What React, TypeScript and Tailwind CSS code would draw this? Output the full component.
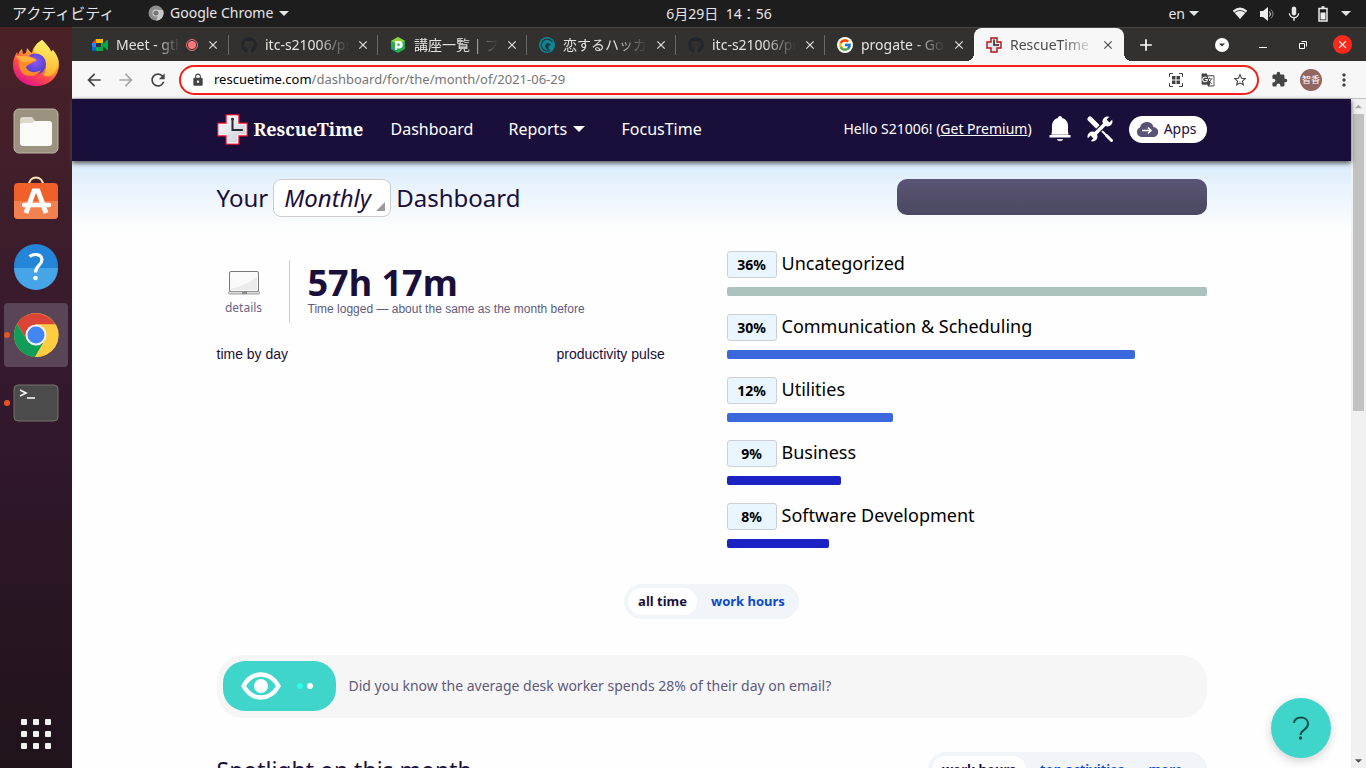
import type { ReactNode } from "react";
import { FaGithub } from "react-icons/fa";
import { FcGoogle } from "react-icons/fc";
import { MdArrowBack, MdArrowForward, MdRefresh, MdLock, MdStarBorder, MdExtension, MdMoreVert, MdGTranslate, MdMic, MdClose, MdAdd } from "react-icons/md";

const UI = "font-['Noto_Sans','Noto_Sans_CJK_JP',sans-serif]";

function CrossLogo({ className }: { className: string }) {
  return (
    <svg viewBox="0 0 30 30" className={className} aria-hidden="true">
      <defs>
        <linearGradient id="cross" x1="0" y1="0" x2="1" y2="1">
          <stop offset="0" stopColor="#ffffff" />
          <stop offset="1" stopColor="#c3ccd4" />
        </linearGradient>
      </defs>
      <path d="M9 1h12v8h8v12h-8v8H9v-8H1V9h8z" fill="url(#cross)" stroke="#f0102c" strokeWidth="1.6" />
      <path d="M9.9 1.9h10.2v8h8v10.2h-8v8H9.9v-8h-8V9.9h8z" fill="none" stroke="#fff" strokeWidth="1" />
      <path d="M15 4.5v11h10" fill="none" stroke="#2b2b33" strokeWidth="2" />
      <circle cx="15" cy="5" r="1.4" fill="#2b2b33" />
    </svg>
  );
}

function CrossFavicon() {
  return (
    <svg viewBox="0 0 16 16" className="size-4" aria-hidden="true">
      <path d="M5 1h6v4h4v6h-4v4H5v-4H1V5h4z" fill="#e4e6e8" stroke="#b3131b" strokeWidth="1.400" />
      <path d="M8 2.500V8h5" fill="none" stroke="#222" strokeWidth="1.500" />
    </svg>
  );
}

function FirefoxIcon() {
  return (
    <svg viewBox="0 0 48 48" className="size-12" aria-hidden="true">
      <defs>
        <linearGradient id="fox" x1="0.8" y1="0.05" x2="0.25" y2="0.95">
          <stop offset="0" stopColor="#fff44f" />
          <stop offset="0.35" stopColor="#ffa436" />
          <stop offset="0.68" stopColor="#ff4a4a" />
          <stop offset="1" stopColor="#e31587" />
        </linearGradient>
        <radialGradient id="globe" cx="0.5" cy="0.4" r="0.6">
          <stop offset="0" stopColor="#9059ff" />
          <stop offset="1" stopColor="#4a3fc4" />
        </radialGradient>
        <linearGradient id="tail" x1="0.5" y1="0" x2="0.4" y2="1">
          <stop offset="0" stopColor="#fff36b" />
          <stop offset="1" stopColor="#ffb22e" />
        </linearGradient>
      </defs>
      <path d="M30 1c5 5 8 8 9 12l2-2c4 5 6 9 6 14 0 13-10 22-23 22S1 38 1 26c0-6 2-10 4-13l1 3c1-3 2-5 4-6l1 5 3-1 1-5c2 2 3 4 5 5 1-6 5-10 10-13z" fill="url(#fox)" />
      <path d="M30 1c5 5 8 8 9 12l2-2c5 7 7 14 2 22-3 5-8 5-12 3 4-4 4-10 1-15-3-4-8-5-10-8 0-5 3-9 8-12z" fill="url(#tail)" />
      <circle cx="23.500" cy="25" r="10.500" fill="url(#globe)" />
      <path d="M7 20c5-5 12-3 17 0 2 2-3 3-6 5-3 1-5 3-3 5 3 4 9 4 14 1-3 6-13 8-19 3-3-4-4-9-3-14z" fill="#ff8a2a" />
      <path d="M4 17c8-1 13 0 18 3l3 2c-5-1-8 2-12 1-4 0-7-2-9-6z" fill="#ffb03a" />
    </svg>
  );
}

function FilesIcon() {
  return (
    <svg viewBox="0 0 46 46" className="size-[46px]" aria-hidden="true">
      <rect x="1" y="1" width="44" height="44" rx="5" fill="#9b9280" stroke="#bdb7aa" />
      <rect x="7" y="13" width="32" height="25" rx="3" fill="#fafaf8" />
      <path d="M7 16v-4c0-2 1-3 3-3h9l3 4-3 2h-9z" fill="#ddd8cc" />
    </svg>
  );
}

function SoftwareIcon() {
  return (
    <svg viewBox="0 0 46 46" className="size-[46px]" aria-hidden="true">
      <path d="M16 9c0-10 14-10 14 0" fill="none" stroke="#f7e2b8" strokeWidth="2" />
      <rect x="1" y="7" width="44" height="36" rx="4" fill="#f0602a" />
      <path d="M1 25h44v14a4 4 0 0 1-4 4H5a4 4 0 0 1-4-4z" fill="#f2814f" />
      <path d="M13 37l8-22h4l8 22" fill="none" stroke="#fff" strokeWidth="5" />
      <path d="M11 29h25" stroke="#fff" strokeWidth="4.500" strokeLinecap="round" />
    </svg>
  );
}

function HelpIcon() {
  return (
    <svg viewBox="0 0 46 46" className="size-[46px]" aria-hidden="true">
      <circle cx="23" cy="22" r="22" fill="#2384d8" />
      <path d="M1 24h44a22 22 0 0 1-44 0z" fill="#46a5e6" />
      <path d="M16.500 12.500c4-3 12-3 12.500 3 0 6-6.500 6-6.500 13" fill="none" stroke="#fff" strokeWidth="3.200" />
      <circle cx="22.500" cy="34" r="2.300" fill="#fff" />
    </svg>
  );
}

function ChromeIcon() {
  return (
    <svg viewBox="0 0 46 46" className="size-[46px]" aria-hidden="true">
      <circle cx="23" cy="23" r="22" fill="#ffcd42" />
      <path d="M4 12A22 22 0 0 1 42 12.500H23L14 28z" fill="#db4437" />
      <path d="M4 12A22 22 0 0 0 22 45L32 28 14 28z" fill="#0f9d58" />
      <path d="M23 12.500h20a22 22 0 0 1-21 32.500l10-17z" fill="#ffcd42" />
      <circle cx="23" cy="23" r="10.500" fill="#f2f2f2" />
      <circle cx="23" cy="23" r="8.500" fill="#4285f4" />
    </svg>
  );
}

function TerminalIcon() {
  return (
    <svg viewBox="0 0 46 38" className="h-[38px] w-[46px]" aria-hidden="true">
      <rect x="1" y="1" width="44" height="36" rx="4" fill="#4b4b4b" stroke="#77736d" />
      <path d="M7 6l6 3-6 3M14 14h8" fill="none" stroke="#fff" strokeWidth="1.600" />
    </svg>
  );
}

function MeetIcon() {
  return (
    <svg viewBox="0 0 16 16" className="size-4" aria-hidden="true">
      <path d="M0 6l4-4v4z" fill="#ea4335" />
      <path d="M4 2h7v4H4z" fill="#fbbc04" />
      <path d="M0 6h4v4H0z" fill="#2684fc" />
      <path d="M0 10h4v4H1a1 1 0 0 1-1-1z" fill="#0066da" />
      <path d="M4 10h7v4H4zM9 6h2v5H9zM11 7l4-4h1v10h-1l-4-4z" fill="#00ac47" />
    </svg>
  );
}

function PaizaIcon() {
  return (
    <svg viewBox="0 0 16 16" className="size-4" aria-hidden="true">
      <path d="M8 0l7 4v8l-7 4-7-4V4z" fill="#23b04a" />
      <path d="M8 0l7 4-7 3-7-3z" fill="#8ed43c" />
      <path d="M1 9l4 5 3 2-7-4z" fill="#0f9aa8" />
      <path d="M5 13V4h4a3.500 3.500 0 0 1 0 7.500H7V13z" fill="#fff" />
      <path d="M7.500 6l3 1.800-3 1.800z" fill="#23b04a" />
    </svg>
  );
}

function SwirlIcon() {
  return (
    <svg viewBox="0 0 16 16" className="size-4" aria-hidden="true">
      <circle cx="8" cy="8" r="8" fill="#0b8795" />
      <path d="M13.500 5a6 6 0 1 0-2.500 8.500" fill="none" stroke="#25343a" strokeWidth="1.200" />
      <path d="M12 7.500C9 4.500 5 7 6.500 10.500c.8 2 2.500 2.700 4.500 2.500-2-1.500-2.500-4 1-5.500z" fill="#25343a" />
    </svg>
  );
}

function LaptopIcon() {
  return (
    <svg viewBox="0 0 32 26" className="h-[26px] w-8" aria-hidden="true">
      <rect x="1.500" y="1.500" width="29" height="20" rx="1.500" fill="#fafafa" stroke="#777" />
      <path d="M3 19c8-2 20-6 26-13v14H3z" fill="#ebebeb" />
      <rect x="0.500" y="21.500" width="31" height="2.500" rx="1" fill="#ddd" stroke="#888" strokeWidth="0.800" />
      <path d="M14 22h5v2h-5z" fill="#888" />
    </svg>
  );
}

function BellIcon() {
  return (
    <svg viewBox="0 0 22 26" className="h-[26px] w-[22px]" aria-hidden="true">
      <path d="M11 0c1.500 0 2 1 2 2 4 1 6 4 6 8 0 5 0 6 .5 8h-17c.5-2 .5-3 .5-8 0-4 2-7 6-8 0-1 .5-2 2-2z" fill="#fff" />
      <path d="M2.500 18h17v1h-17z" fill="#b9b4c6" />
      <path d="M.5 19h21v2.500H.5z" fill="#fff" />
      <path d="M8 23h6c0 3-6 3-6 0z" fill="#d5d2dd" />
    </svg>
  );
}

function ToolsIcon() {
  return (
    <svg viewBox="0 0 26 26" className="size-[26px]" aria-hidden="true">
      <path d="M3 3l9 9" stroke="#fff" strokeWidth="5" strokeLinecap="round" />
      <path d="M12 12l9 9" stroke="#fff" strokeWidth="1.800" />
      <path d="M19.500 19.500L24.500 24.500" stroke="#fff" strokeWidth="3" strokeLinecap="round" />
      <path d="M7 19L19 7" stroke="#1a0f3a" strokeWidth="6" />
      <circle cx="20.500" cy="5.500" r="5" fill="#fff" />
      <circle cx="5.500" cy="20.500" r="5" fill="#fff" />
      <path d="M6 20L20 6" stroke="#fff" strokeWidth="3.600" />
      <path d="M21 5L26 0M5 21L0 26" stroke="#1a0f3a" strokeWidth="4" />
    </svg>
  );
}

function CloudIcon() {
  return (
    <svg viewBox="0 0 22 16" className="h-4 w-[22px]" aria-hidden="true">
      <path d="M5 16a5 5 0 0 1-1-9.500A7 7 0 0 1 17.500 6 5 5 0 0 1 17 16z" fill="#5a5378" />
      <path d="M6 9.500h9M12 6.500l3 3-3 3" fill="none" stroke="#fff" strokeWidth="1.500" />
    </svg>
  );
}

function EyeIcon() {
  return (
    <svg viewBox="0 0 40 28" className="h-7 w-10" aria-hidden="true">
      <path d="M2.500 14C7 6 13 2.500 20 2.500S33 6 37.500 14C33 22 27 25.500 20 25.500S7 22 2.500 14z" fill="none" stroke="#fff" strokeWidth="4.500" strokeLinejoin="round" />
      <circle cx="20" cy="14" r="7" fill="#fff" />
    </svg>
  );
}

function Caret({ className }: { className: string }) {
  return (
    <svg viewBox="0 0 10 5" className={className} aria-hidden="true">
      <path d="M0 0h10L5 5z" fill="currentColor" />
    </svg>
  );
}

const dock: { name: string; icon: ReactNode; running?: boolean; active?: boolean }[] = [
  { name: "Firefox", icon: <FirefoxIcon /> },
  { name: "Files", icon: <FilesIcon /> },
  { name: "Software", icon: <SoftwareIcon /> },
  { name: "Help", icon: <HelpIcon /> },
  { name: "Chrome", icon: <ChromeIcon />, running: true, active: true },
  { name: "Terminal", icon: <TerminalIcon />, running: true },
];

const tabs: { title: string; icon: ReactNode; recording?: boolean; active?: boolean }[] = [
  { title: "Meet - gth", icon: <MeetIcon />, recording: true },
  { title: "itc-s21006/pr", icon: <FaGithub className="size-4 text-[#20262c]" /> },
  { title: "講座一覧 | プ", icon: <PaizaIcon /> },
  { title: "恋するハッカ", icon: <SwirlIcon /> },
  { title: "itc-s21006/pr", icon: <FaGithub className="size-4 text-[#20262c]" /> },
  {
    title: "progate - Go",
    icon: (
      <span className="flex size-4 items-center justify-center rounded-full bg-white">
        <FcGoogle className="size-[14px]" />
      </span>
    ),
  },
  { title: "RescueTime -", icon: <CrossFavicon />, active: true },
];

const categories = [
  { name: "Uncategorized", percent: 36, width: 100, color: "bg-[#acc2bf]" },
  { name: "Communication & Scheduling", percent: 30, width: 85.2, color: "bg-[#3c68dd]" },
  { name: "Utilities", percent: 12, width: 34.6, color: "bg-[#3c68dd]" },
  { name: "Business", percent: 9, width: 23.8, color: "bg-[#1b24c2]" },
  { name: "Software Development", percent: 8, width: 21.3, color: "bg-[#1b24c2]" },
];

function SystemBar() {
  return (
    <header className="grid h-[27px] shrink-0 grid-cols-[1fr_auto_1fr] items-center bg-[#1d1d1d] text-sm text-[#e6e6e6]">
      <div className="flex items-center pl-3">
        <button className="w-[136px] text-left text-[15px]">アクティビティ</button>
        <button className="flex items-center gap-[6px]">
          <svg viewBox="0 0 16 16" className="size-4" aria-hidden="true">
            <circle cx="8" cy="8" r="7.500" fill="#8d8d8d" />
            <path d="M8 5h7a7.500 7.500 0 0 1-7 10.500L11 9z" fill="#c9c9c9" />
            <circle cx="8" cy="8" r="3.500" fill="#ddd" />
            <circle cx="8" cy="8" r="2.600" fill="#777" />
          </svg>
          Google Chrome
          <Caret className="h-[5px] w-[10px]" />
        </button>
      </div>
      <time className="whitespace-pre pl-[72px]">6月29日  14：56</time>
      <div className="flex items-center justify-end pr-[15px]">
        <button className="mr-[33px] flex items-center gap-1">
          en <Caret className="h-[5px] w-[10px]" />
        </button>
        <svg viewBox="0 0 16 13" className="mr-3 h-[13px] w-4" aria-hidden="true">
          <path d="M1 4q7-6 14 0L8 12z" fill="#ededed" />
          <path d="M1 4q7-6 14 0" fill="none" stroke="#ededed" strokeWidth="1" />
          <path d="M2.500 5.500q5.500-4 11 0" fill="none" stroke="#1d1d1d" strokeWidth="0.800" />
        </svg>
        <svg viewBox="0 0 16 14" className="mr-2 h-[14px] w-4" aria-hidden="true">
          <path d="M0 4h3l5-4v14l-5-4H0z" fill="#ededed" />
          <path d="M9.500 4.500q2 2.500 0 5" fill="none" stroke="#ededed" />
          <path d="M11 2.500q4 4.500 0 9" fill="none" stroke="#8b8b8b" />
        </svg>
        <MdMic className="mr-[14px] h-[18px] w-5" />
        <svg viewBox="0 0 10 16" className="mr-[13px] h-4 w-[10px]" aria-hidden="true">
          <path d="M1 2.500h8v12.500H1zM3.500 1h3" fill="none" stroke="#ededed" strokeWidth="1.500" />
          <path d="M2.500 6.500h5v7h-5z" fill="#ededed" />
        </svg>
        <Caret className="h-[5px] w-[10px]" />
      </div>
    </header>
  );
}

function Dock() {
  return (
    <nav aria-label="Dock" className="flex w-[72px] shrink-0 flex-col items-center justify-between bg-linear-to-b from-[#4a2226] via-[#35192e] via-45% to-[#20131c] pt-1 pb-[2px]">
      <ul className="flex flex-col gap-1">
        {dock.map((item) => (
          <li key={item.name} className="relative">
            <button aria-label={item.name} className={`flex size-16 items-center justify-center rounded ${item.active ? "bg-[#594555]" : ""}`}>
              {item.icon}
            </button>
            {item.running && <span className="absolute top-[29px] left-0 size-[6px] rounded-full bg-[#e95420]" />}
          </li>
        ))}
      </ul>
      <button aria-label="Show applications" className="grid size-16 grid-cols-[repeat(3,6px)] place-content-center gap-[6px]">
        {[0, 1, 2, 3, 4, 5, 6, 7, 8].map((n) => (
          <span key={n} className="size-[6px] rounded-[1px] bg-[#f2f2f0]" />
        ))}
      </button>
    </nav>
  );
}

function TabStrip() {
  return (
    <div className="flex h-[34px] shrink-0 items-center border-t border-[#484643] bg-[#323130] pr-[14px] pl-2 text-sm text-[#e4e3e2]">
      <div className="flex min-w-0 items-center self-stretch">
        {tabs.map((tab, index) => (
          <div
            key={index}
            className={
              tab.active
                ? "relative flex h-full w-[150px] items-center rounded-t-lg bg-[#f7f7f7] pl-3 text-[#4b4b4b] before:absolute before:bottom-0 before:-left-2 before:size-2 before:bg-[radial-gradient(circle_at_top_left,transparent_8px,#f7f7f7_8px)] after:absolute after:-right-2 after:bottom-0 after:size-2 after:bg-[radial-gradient(circle_at_top_right,transparent_8px,#f7f7f7_8px)]"
                : "flex w-[149px] items-center pl-3"
            }
          >
            <span className="flex w-6 shrink-0">{tab.icon}</span>
            <a
              href="#"
              className={`${tab.recording ? "w-16" : "w-[84px]"} overflow-hidden whitespace-nowrap [mask-image:linear-gradient(to_right,black_62%,transparent_100%)]`}
            >
              {tab.title}
            </a>
            {tab.recording && (
              <span className="ml-[6px] flex size-3 shrink-0 items-center justify-center rounded-full border border-[#f4747a]">
                <span className="size-2 rounded-full bg-[#f9777d]" />
              </span>
            )}
            <button aria-label={`Close ${tab.title}`} className={tab.recording ? "ml-2" : "ml-[7px]"}>
              <MdClose className="size-[14px]" />
            </button>
            {!tab.active && index < 5 && <span className="ml-auto h-5 w-px bg-[#6b6968]" />}
          </div>
        ))}
      </div>
      <button aria-label="New tab" className="ml-3">
        <MdAdd className="size-5 text-white" />
      </button>
      <div className="ml-auto flex items-center text-white">
        <button aria-label="Search tabs" className="mr-[30px] flex size-[14px] items-center justify-center rounded-full bg-white text-[#333]">
          <Caret className="h-1 w-[6px]" />
        </button>
        <button aria-label="Minimise" className="mr-8 h-[6px] w-2 border-b border-white" />
        <button aria-label="Restore" className="mr-[26px]">
          <svg viewBox="0 0 8 8" className="size-2" aria-hidden="true">
            <path d="M.5 2.500h5v5h-5zM2.500.5h5v5" fill="none" stroke="#fff" />
          </svg>
        </button>
        <button aria-label="Close window" className="flex size-[19px] items-center justify-center rounded-full bg-[#fc2a1d]">
          <MdClose className="size-[13px]" />
        </button>
      </div>
    </div>
  );
}

function Toolbar() {
  return (
    <div className="flex h-[38px] shrink-0 items-center border-b border-[#c4c4c4] bg-[#f7f7f7] pr-3 pl-3 text-[#444]">
      <button aria-label="Back">
        <MdArrowBack className="size-5" />
      </button>
      <button aria-label="Forward" className="ml-3 text-[#a8a8a8]">
        <MdArrowForward className="size-5" />
      </button>
      <button aria-label="Reload" className="ml-3">
        <MdRefresh className="size-5" />
      </button>
      <label className="ml-[11px] flex h-[30px] flex-1 items-center rounded-full border-2 border-[#f71f15] bg-white pr-[9px] pl-[10px] text-[13px]">
        <MdLock className="mr-[9px] size-[14px]" />
        <span className="text-black">rescuetime.com</span>
        <input aria-label="Address" className="min-w-0 flex-1 text-[#757575] outline-none" defaultValue="/dashboard/for/the/month/of/2021-06-29" />
        <svg viewBox="0 0 14 14" className="mr-[18px] size-[14px]" aria-hidden="true">
          <path d="M.5 4V.5H4M10 .5h3.500V4M13.500 10v3.500H10M4 13.500H.5V10" fill="none" stroke="#444" />
          <path d="M3 3h3.500v3.500H3zM7.500 3H11v3.500H7.500zM3 7.500h3.500V11H3zM7.500 7.500H11V11H7.500z" fill="#444" />
        </svg>
        <MdGTranslate className="mr-[17px] size-[14px]" />
        <MdStarBorder className="size-4" />
      </label>
      <button aria-label="Extensions" className="ml-3">
        <MdExtension className="size-[17px]" />
      </button>
      <button aria-label="Profile" className="ml-3 flex size-[22px] items-center justify-center rounded-full bg-[#916660] text-[9px] text-white">
        智香
      </button>
      <button aria-label="Menu" className="ml-3">
        <MdMoreVert className="size-5" />
      </button>
    </div>
  );
}

function SiteHeader() {
  return (
    <header className="relative h-[62px] shrink-0 bg-[#1a0f3a] text-white shadow-[0_2px_5px_#4a4a4a]">
      <div className="mx-auto flex h-full max-w-[990px] items-center pb-[2px]">
        <a href="#" className="flex w-[174px] items-center gap-[6px]">
          <CrossLogo className="size-[31px] shrink-0" />
          <span className="font-['Noto_Serif','DejaVu_Serif','Liberation_Serif',serif] text-lg font-bold">RescueTime</span>
        </a>
        <nav className="flex items-center text-base">
          <a href="#" className="w-[118px]">Dashboard</a>
          <a href="#" className="flex w-[113px] items-center gap-[6px]">
            Reports <Caret className="h-[6px] w-3" />
          </a>
          <a href="#">FocusTime</a>
        </nav>
        <div className="ml-auto flex items-center text-sm">
          <p className="mr-[17px]">
            Hello S21006! (<a href="#" className="underline">Get Premium</a>)
          </p>
          <button aria-label="Alerts" className="mr-4"><BellIcon /></button>
          <button aria-label="Tools" className="mr-4"><ToolsIcon /></button>
          <button className="flex h-[27px] items-center gap-[6px] rounded-full bg-white px-[7px] pr-[10px] text-[#1a0f3a]">
            <CloudIcon /> Apps
          </button>
        </div>
      </div>
    </header>
  );
}

function PillGroup({ items }: { items: string[] }) {
  return (
    <div className="flex h-[35px] items-center gap-1 rounded-full bg-[#f1f5f9] px-1 text-[13px] font-bold text-[#0b48cc]">
      {items.map((item, index) => (
        <button key={item} className={index === 0 ? "h-[27px] rounded-full bg-white px-[10px] text-[#1a0f3a]" : "h-[27px] px-[10px] nth-3:pr-5"}>
          {item}
        </button>
      ))}
    </div>
  );
}

function Dashboard() {
  return (
    <main className="min-h-0 flex-1 overflow-hidden bg-[#fefefe] bg-linear-to-b from-[#daecfc] to-[#fefefe] to-[70px] text-[#1a0f3a]">
      <div className="mx-auto max-w-[990px] pt-[18px]">
        <div className="flex justify-between">
          <h1 className="flex h-[38px] items-center gap-[5px] text-2xl">
            Your
            <span className="relative block">
              <select aria-label="Period" className="h-[38px] w-[118px] appearance-none rounded-lg border border-[#ccc] bg-white pl-[10px] italic">
                <option>Monthly</option>
              </select>
              <svg viewBox="0 0 9 9" className="pointer-events-none absolute right-[6px] bottom-[6px] size-[9px]" aria-hidden="true">
                <path d="M9 0v9H0z" fill="#999" />
              </svg>
            </span>
            Dashboard
          </h1>
          <div className="h-9 w-[310px] rounded-[10px] bg-linear-to-b from-[#5a5475] to-[#4a4861]" />
        </div>

        <div className="mt-[34px] flex justify-between">
          <section className="flex-1">
            <div className="mt-[9px] flex h-[63px]">
              <a href="#" className="flex w-[73px] flex-col items-center gap-1 border-r border-[#ccc] pt-[10px] pr-[18px] text-xs text-[#6b6685]">
                <LaptopIcon />
                details
              </a>
              <div className="pl-[18px]">
                <p className="-mb-1 text-4xl leading-[46px] font-bold">57h 17m</p>
                <p className="font-['Liberation_Sans',sans-serif] text-xs leading-[14px] text-[#5f5a7c]">Time logged — about the same as the month before</p>
              </div>
            </div>
            <div className="mt-[21px] flex font-['Liberation_Sans',sans-serif] text-sm">
              <h2 className="w-[340px]">time by day</h2>
              <h2>productivity pulse</h2>
            </div>
          </section>
          <ul className="flex w-[480px] flex-col gap-[18px] text-black">
            {categories.map((c) => (
              <li key={c.name} className="flex flex-col gap-[9px]">
                <div className="flex h-[27px] items-start gap-[5px]">
                  <span className="flex h-[27px] w-[50px] items-center justify-center rounded-[3px] border border-[#ccd0d3] bg-[#e9f5ff] text-sm font-bold">{c.percent}%</span>
                  <a href="#" className="text-lg leading-[25px]">{c.name}</a>
                </div>
                <div className={`h-[9px] rounded-[2px] ${c.color}`} style={{ width: `${c.width}%` }} />
              </li>
            ))}
          </ul>
        </div>

        <div className="mt-9 flex justify-center">
          <PillGroup items={["all time", "work hours"]} />
        </div>

        <aside className="mt-9 flex h-[63px] items-center rounded-[26px] bg-[#f6f6f6] pb-[2px] pl-[6px]">
          <div className="flex h-[50px] w-[113px] items-center rounded-[22px] bg-[#3fd5ca] pl-[18px]">
            <EyeIcon />
            <span className="ml-4 size-[6px] rounded-full bg-[#2cfbe8]" />
            <span className="ml-1 size-[6px] rounded-full bg-white" />
          </div>
          <p className="ml-[13px] text-sm text-[#5f5a7c]">Did you know the average desk worker spends 28% of their day on email?</p>
        </aside>

        <div className="mt-[34px] flex justify-between">
          <h2 className="text-[23px] leading-9">Spotlight on this month</h2>
          <PillGroup items={["work hours", "top activities", "more"]} />
        </div>
      </div>
    </main>
  );
}

function Scrollbar() {
  return (
    <div aria-hidden="true" className="flex w-[15px] shrink-0 flex-col items-center bg-[#f1f1f1]">
      <Caret className="my-[5px] h-[5px] w-[7px] rotate-180 text-[#a3a3a3]" />
      <div className="h-[297px] w-[11px] bg-[#c1c1c1]" />
      <Caret className="mt-auto mb-[5px] h-1 w-[7px] text-[#505050]" />
    </div>
  );
}

export default function App() {
  return (
    <div className={`flex h-screen flex-col overflow-hidden ${UI}`}>
      <SystemBar />
      <div className="flex min-h-0 flex-1">
        <Dock />
        <div className="flex min-w-0 flex-1 flex-col">
          <TabStrip />
          <Toolbar />
          <div className="relative flex min-h-0 flex-1">
            <div className="flex min-w-0 flex-1 flex-col">
              <SiteHeader />
              <Dashboard />
            </div>
            <Scrollbar />
            <button aria-label="Help" className="absolute right-[35px] bottom-[10px] size-[60px] rounded-full bg-[#3fd5ca] shadow-[0_3px_10px_#0000002e]">
              <svg viewBox="0 0 60 60" className="size-[60px]" aria-hidden="true">
                <path d="M23 25c0-7 14-8 14 1 0 6-7 5-7.500 11" fill="none" stroke="#15504f" strokeWidth="2" />
                <circle cx="29.500" cy="40" r="1.700" fill="#15504f" />
              </svg>
            </button>
          </div>
        </div>
      </div>
    </div>
  );
}
